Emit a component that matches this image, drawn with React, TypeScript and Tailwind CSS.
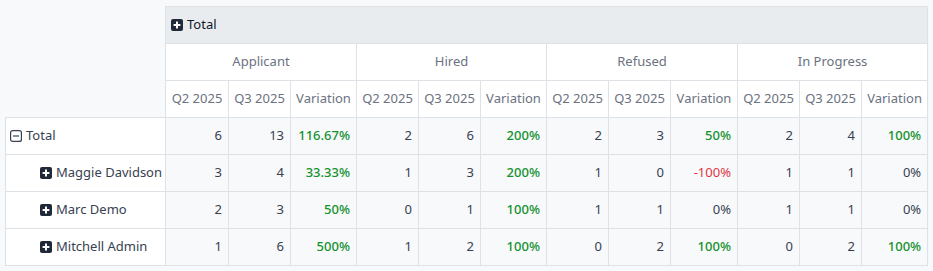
import React from 'react';

type Cell = { v: string; tone?: 'up' | 'down' };

const measures = ['Applicant', 'Hired', 'Refused', 'In Progress'];
const colWidths = [160, 63, 62, 66, 62, 62, 66, 62, 62, 67, 62, 62, 66];

const g = (v: string): Cell => ({ v, tone: 'up' });
const r = (v: string): Cell => ({ v, tone: 'down' });
const n = (v: string): Cell => ({ v });

const rows: { label: string; total?: boolean; cells: Cell[] }[] = [
  {
    label: 'Total',
    total: true,
    cells: [n('6'), n('13'), g('116.67%'), n('2'), n('6'), g('200%'), n('2'), n('3'), g('50%'), n('2'), n('4'), g('100%')],
  },
  {
    label: 'Maggie Davidson',
    cells: [n('3'), n('4'), g('33.33%'), n('1'), n('3'), g('200%'), n('1'), n('0'), r('-100%'), n('1'), n('1'), n('0%')],
  },
  {
    label: 'Marc Demo',
    cells: [n('2'), n('3'), g('50%'), n('0'), n('1'), g('100%'), n('1'), n('1'), n('0%'), n('1'), n('1'), n('0%')],
  },
  {
    label: 'Mitchell Admin',
    cells: [n('1'), n('6'), g('500%'), n('1'), n('2'), g('100%'), n('0'), n('2'), g('100%'), n('0'), n('2'), g('100%')],
  },
];

function PlusBox() {
  return (
    <svg width="12" height="12" viewBox="0 0 12 12" className="shrink-0">
      <rect x="0" y="0" width="12" height="12" rx="2" fill="#1f2937" />
      <path d="M6 2.6v6.8M2.6 6h6.8" stroke="#fff" strokeWidth="2" />
    </svg>
  );
}

function MinusBox() {
  return (
    <svg width="12" height="12" viewBox="0 0 12 12" className="shrink-0">
      <rect x="0.6" y="0.6" width="10.8" height="10.8" rx="2" fill="none" stroke="#374151" strokeWidth="1.2" />
      <path d="M3 6h6" stroke="#374151" strokeWidth="1.2" />
    </svg>
  );
}

export default function App() {
  const cell = 'border border-[#dee2e6] h-[37px] p-0';
  return (
    <div className="min-h-[271px] bg-[#f8f9fa] pl-[5px] pt-[6px] text-[13px] text-[#374151]" style={{ fontFamily: '"Noto Sans", "Open Sans", sans-serif' }}>
      <table className="table-fixed border-collapse" style={{ width: colWidths.reduce((a, b) => a + b, 0) }}>
        <colgroup>
          {colWidths.map((w, i) => (
            <col key={i} style={{ width: w }} />
          ))}
        </colgroup>
        <thead>
          <tr>
            <th rowSpan={3} className="p-0" />
            <th colSpan={12} className={`${cell} bg-[#e9ecef] text-left font-normal`}>
              <div className="flex items-center gap-[4px] pl-[5px] text-[#111827]">
                <PlusBox />
                <span>Total</span>
              </div>
            </th>
          </tr>
          <tr>
            {measures.map((m) => (
              <th key={m} colSpan={3} className={`${cell} bg-white font-normal text-[#6b7280]`}>
                {m}
              </th>
            ))}
          </tr>
          <tr>
            {measures.flatMap((m) =>
              ['Q2 2025', 'Q3 2025', 'Variation'].map((s) => (
                <th key={m + s} className={`${cell} bg-white font-normal text-[#6b7280] whitespace-nowrap`}>
                  {s}
                </th>
              ))
            )}
          </tr>
        </thead>
        <tbody>
          {rows.map((row) => (
            <tr key={row.label}>
              <td className={`${cell} bg-white`}>
                <div className={`flex items-center gap-[4px] whitespace-nowrap ${row.total ? 'pl-[4px]' : 'pl-[34px]'}`}>
                  {row.total ? <MinusBox /> : <PlusBox />}
                  <span>{row.label}</span>
                </div>
              </td>
              {row.cells.map((c, i) => (
                <td
                  key={i}
                  className={`${cell} bg-[#f8f9fa] pr-[6px] text-right ${
                    c.tone === 'up' ? 'text-[#15912f] font-medium' : c.tone === 'down' ? 'text-[#dc3545]' : ''
                  }`}
                >
                  {c.v}
                </td>
              ))}
            </tr>
          ))}
        </tbody>
      </table>
    </div>
  );
}
